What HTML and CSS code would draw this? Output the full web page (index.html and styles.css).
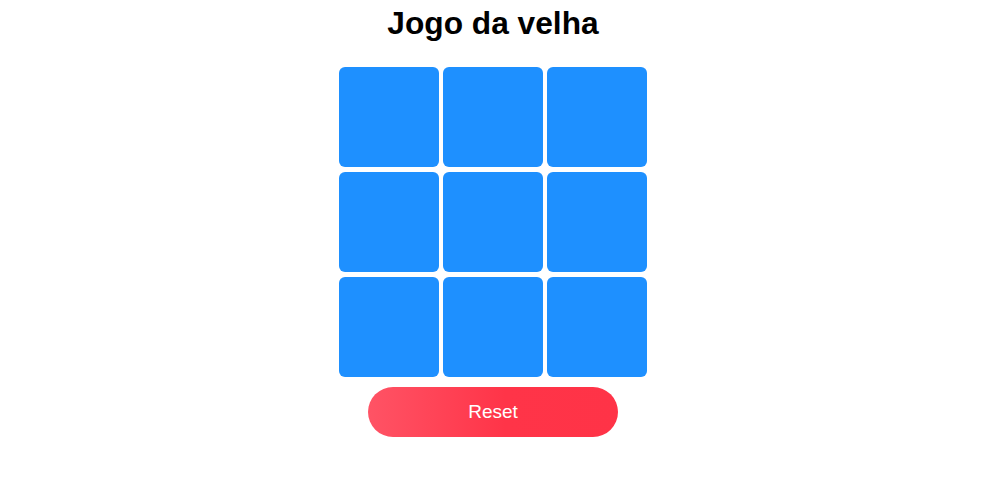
FILE: index.html
```html
<!DOCTYPE html>
<html lang="pt">
<head>
<meta charset="utf-8">
<title>Jogo da velha</title>
<link rel="stylesheet" href="styles.css">
</head>
<body>
<main class="game">
  <h1 class="title">Jogo da velha</h1>
  <div class="board">
    <div class="cell"></div>
    <div class="cell"></div>
    <div class="cell"></div>
    <div class="cell"></div>
    <div class="cell"></div>
    <div class="cell"></div>
    <div class="cell"></div>
    <div class="cell"></div>
    <div class="cell"></div>
  </div>
  <button class="reset">Reset</button>
</main>
</body>
</html>
```
FILE: styles.css
```css
html, body {
  margin: 0;
  padding: 0;
  background: #ffffff;
}
.game {
  display: flex;
  flex-direction: column;
  align-items: center;
  padding: 5px 1px 0 0;
  font-family: "Liberation Sans", Arial, sans-serif;
}
.title {
  margin: 0 0 25px;
  font-size: 31.7px;
  line-height: 37px;
  font-weight: bold;
  color: #000;
}
.board {
  display: grid;
  grid-template-columns: repeat(3, 100px);
  grid-auto-rows: 100px;
  column-gap: 4px;
  row-gap: 5px;
}
.cell {
  background: #1e90ff;
  border-radius: 6px;
}
.reset {
  margin-top: 10px;
  width: 250px;
  height: 50px;
  border: none;
  border-radius: 25px;
  background: linear-gradient(to right, #ff5365 0%, #ff3448 55%, #ff3347 100%);
  color: #ffffff;
  font-family: "Liberation Sans", Arial, sans-serif;
  font-size: 19px;
  padding: 0;
}
```
